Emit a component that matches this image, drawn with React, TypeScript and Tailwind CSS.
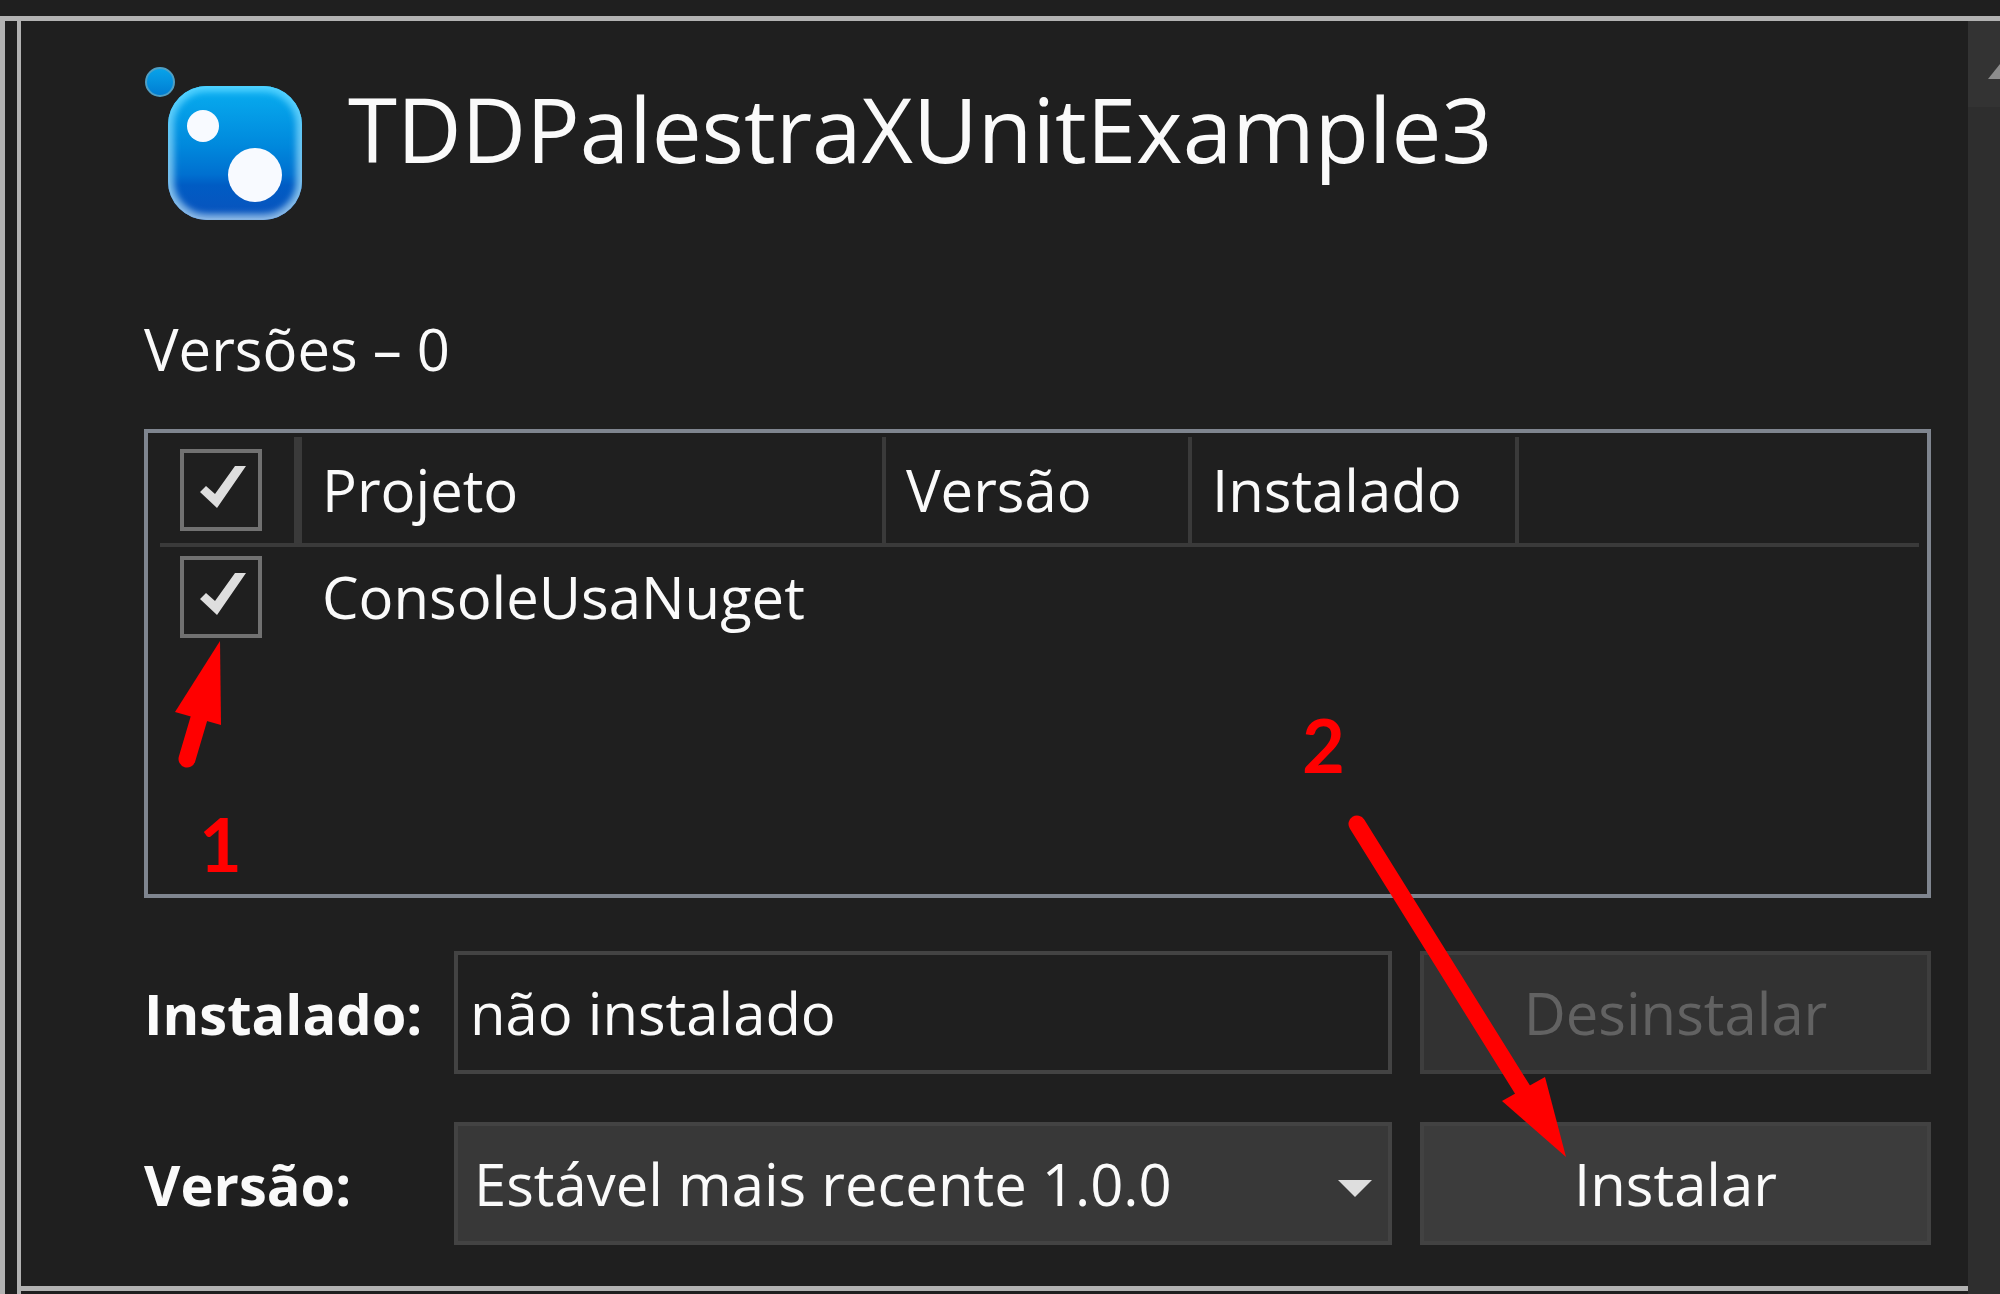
import { useState } from 'react';

function PackageIcon() {
  return (
    <svg className="h-[158px] w-40 shrink-0" viewBox="0 0 160 158" aria-hidden="true">
      <defs>
        <linearGradient id="body" x1="0" y1="0" x2="0" y2="1">
          <stop offset="0" stopColor="#08aef0" />
          <stop offset="0.45" stopColor="#0088dc" />
          <stop offset="0.66" stopColor="#0070d0" />
          <stop offset="0.74" stopColor="#005cc4" />
          <stop offset="1" stopColor="#0a52bc" />
        </linearGradient>
        <linearGradient id="rim" x1="0" y1="0" x2="0" y2="1">
          <stop offset="0" stopColor="#4cd0ff" />
          <stop offset="1" stopColor="#86b4e4" />
        </linearGradient>
        <linearGradient id="dot" x1="0" y1="0" x2="0" y2="1">
          <stop offset="0" stopColor="#08a4ea" />
          <stop offset="1" stopColor="#007cd2" />
        </linearGradient>
        <filter id="glow" x="-10%" y="-10%" width="120%" height="120%">
          <feGaussianBlur stdDeviation="3" />
        </filter>
        <clipPath id="shape">
          <rect x="24" y="21" width="134" height="134" rx="39" />
        </clipPath>
      </defs>
      <circle cx="16" cy="17" r="14" fill="url(#dot)" stroke="#4f9fc4" strokeWidth="2" />
      <g clipPath="url(#shape)">
        <rect x="24" y="21" width="134" height="134" fill="url(#body)" />
        <rect x="24" y="21" width="134" height="134" rx="39" fill="none" stroke="url(#rim)" strokeWidth="12" filter="url(#glow)" />
      </g>
      <rect x="25" y="22" width="132" height="132" rx="38" fill="none" stroke="url(#rim)" strokeWidth="2" opacity="0.7" />
      <circle cx="59" cy="61" r="16" fill="#f8faff" />
      <circle cx="111" cy="110" r="27" fill="#f8faff" />
    </svg>
  );
}

function CheckBox({ label }: { label: string }) {
  const [checked, setChecked] = useState(true);
  return (
    <span className="relative block size-[82px]">
      <input
        type="checkbox"
        aria-label={label}
        checked={checked}
        onChange={(e) => setChecked(e.target.checked)}
        className="block size-full appearance-none border-4 border-[#717171] bg-[#1f1f1f]"
      />
      {checked && (
        <svg className="pointer-events-none absolute inset-0" viewBox="0 0 82 82" aria-hidden="true">
          <path d="M20 43 L26 37 L35 45 L55 17 L66 17 L37 59 Z" fill="#dedede" />
        </svg>
      )}
    </span>
  );
}

function ProjectTable() {
  return (
    <div className="mt-11 min-h-[469px] border-4 border-[#7f858f] pt-1 pr-2 pl-3">
      <table className="w-full table-fixed border-separate border-spacing-0 text-left">
        <colgroup>
          <col className="w-[142px]" />
          <col className="w-[584px]" />
          <col className="w-[306px]" />
          <col className="w-[327px]" />
          <col />
        </colgroup>
        <thead>
          <tr className="h-[110px]">
            <th className="border-r-8 border-b-4 border-[#3a3a3a] p-0 pl-5">
              <CheckBox label="Selecionar todos" />
            </th>
            <th className="border-r-4 border-b-4 border-[#3a3a3a] p-0 pl-5 font-normal">Projeto</th>
            <th className="border-r-4 border-b-4 border-[#3a3a3a] p-0 pl-5 font-normal">Versão</th>
            <th className="border-r-4 border-b-4 border-[#3a3a3a] p-0 pl-5 font-normal">Instalado</th>
            <th className="border-b-4 border-[#3a3a3a] p-0" />
          </tr>
        </thead>
        <tbody>
          <tr className="h-[100px]">
            <td className="p-0 pl-5">
              <CheckBox label="ConsoleUsaNuget" />
            </td>
            <td className="p-0 pl-5">ConsoleUsaNuget</td>
            <td className="p-0" />
            <td className="p-0" />
            <td className="p-0" />
          </tr>
        </tbody>
      </table>
    </div>
  );
}

function InstallForm() {
  return (
    <form className="mt-[53px] grid grid-cols-[282px_1fr_511px] items-center gap-x-7 gap-y-12" onSubmit={(e) => e.preventDefault()}>
      <label htmlFor="installed" className="text-[56px] font-bold whitespace-nowrap">Instalado:</label>
      <input
        id="installed"
        readOnly
        value="não instalado"
        className="h-[123px] w-full min-w-0 border-4 border-[#434343] bg-[#1f1f1f] px-3"
      />
      <button type="button" disabled className="h-[123px] border-4 border-[#3e3e3e] bg-[#323232] text-[#626262]">
        Desinstalar
      </button>

      <label htmlFor="version" className="text-[56px] font-bold whitespace-nowrap">Versão:</label>
      <div className="relative min-w-0">
        <select id="version" className="block h-[123px] w-full appearance-none border-4 border-[#434343] bg-[#383838] px-4">
          <option>Estável mais recente 1.0.0</option>
        </select>
        <svg className="pointer-events-none absolute top-[58px] right-5 h-[17px] w-[34px]" viewBox="0 0 34 17" aria-hidden="true">
          <path d="M0 0 H34 L17 17 Z" fill="#dedede" />
        </svg>
      </div>
      <button type="submit" className="h-[123px] border-4 border-[#424242] bg-[#3c3c3c]">
        Instalar
      </button>
    </form>
  );
}

function Annotations() {
  return (
    <div className="pointer-events-none absolute inset-0 font-['Lato',sans-serif] text-[74px] leading-none font-bold text-[#ff0000]">
      <svg className="absolute top-[616px] left-[149px] h-[140px] w-[60px]" viewBox="0 0 60 140" aria-hidden="true">
        <path d="M17 122 L30 78" stroke="#ff0000" strokeWidth="17" strokeLinecap="round" />
        <path d="M50 4 L5 75 L51 88 Z" fill="#ff0000" />
      </svg>
      <span className="absolute top-[786px] left-[178px]">1</span>
      <span className="absolute top-[687px] right-[623px]">2</span>
      <svg className="absolute top-[789px] right-[389px] h-[360px] w-[240px]" viewBox="0 0 240 360" aria-hidden="true">
        <path d="M18 14 L185 282" stroke="#ff0000" strokeWidth="17" strokeLinecap="round" />
        <path d="M227 347 L163 291 L206 267 Z" fill="#ff0000" />
      </svg>
    </div>
  );
}

export default function App() {
  return (
    <main className="flex min-h-screen flex-col bg-[#1f1f1f] pt-4 font-['Open_Sans',sans-serif] text-[58px] leading-[72px] text-[#fafafa]">
      <div className="flex flex-1 border-t-[5px] border-l-[5px] border-[#b2b2b2] pl-3">
        <div className="flex min-w-0 flex-1 flex-col border-l-4 border-[#b2b2b2] pb-[3px]">
          <section className="relative flex-1 border-b-[5px] border-[#b2b2b2] pt-11 pr-[37px] pb-10 pl-[123px]">
            <header className="flex items-start gap-11">
              <PackageIcon />
              <h1 className="text-[89px] leading-[128px]">TDDPalestraXUnitExample3</h1>
            </header>
            <p className="mt-[90px]">Versões – 0</p>
            <ProjectTable />
            <InstallForm />
            <Annotations />
          </section>
        </div>
        {/* Scroll bar */}
        <div className="w-8 shrink-0 overflow-hidden bg-[#2e2e2e]">
          <button type="button" aria-label="Rolar para cima" className="block h-[86px] w-full bg-[#333333] pt-3">
            <svg className="ml-auto h-[17px] w-3" viewBox="0 0 12 17" aria-hidden="true">
              <path d="M0 17 L12 2 V17 Z" fill="#8c8c8c" />
            </svg>
          </button>
        </div>
      </div>
    </main>
  );
}
